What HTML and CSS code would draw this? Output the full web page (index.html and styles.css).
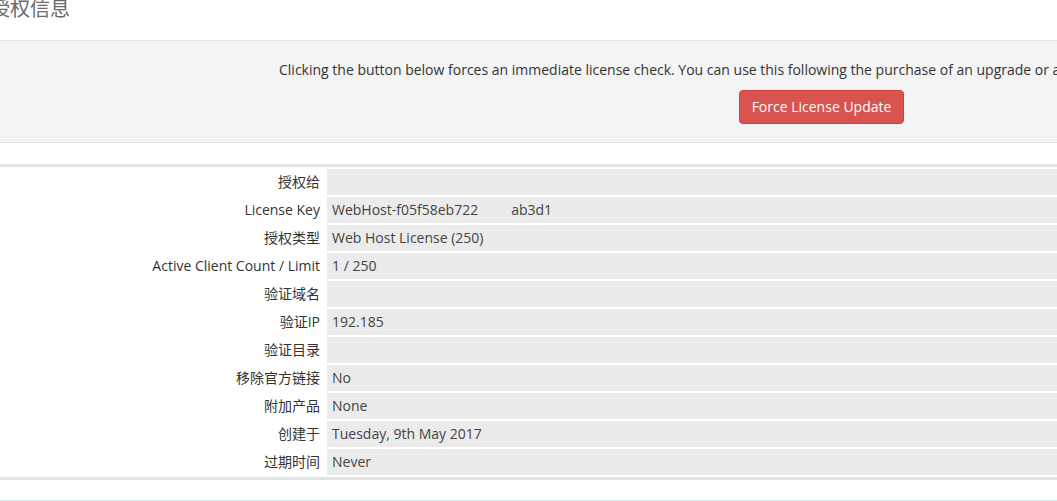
FILE: index.html
```html
<!DOCTYPE html>
<html lang="zh">
<head>
<meta charset="utf-8">
<title>授权信息</title>
<link rel="stylesheet" href="styles.css">
</head>
<body>
<div class="page">
  <h1 class="title">授权信息</h1>
  <div class="panel">
    <p class="panel-text">Clicking the button below forces an immediate license check. You can use this following the purchase of an upgrade or add-on to have the changes reflected immediately.</p>
    <div class="panel-actions">
      <button class="btn-danger" type="button">Force License Update</button>
    </div>
  </div>
  <table class="info">
    <tbody>
      <tr><td class="label">授权给</td><td class="value"></td></tr>
      <tr><td class="label">License Key</td><td class="value">WebHost-f05f58eb722<span class="blur-gap"></span>ab3d1</td></tr>
      <tr><td class="label">授权类型</td><td class="value">Web Host License (250)</td></tr>
      <tr><td class="label">Active Client Count / Limit</td><td class="value">1 / 250</td></tr>
      <tr><td class="label">验证域名</td><td class="value"></td></tr>
      <tr><td class="label">验证IP</td><td class="value">192.185</td></tr>
      <tr><td class="label">验证目录</td><td class="value"></td></tr>
      <tr><td class="label">移除官方链接</td><td class="value">No</td></tr>
      <tr><td class="label">附加产品</td><td class="value">None</td></tr>
      <tr><td class="label">创建于</td><td class="value">Tuesday, 9th May 2017</td></tr>
      <tr><td class="label">过期时间</td><td class="value">Never</td></tr>
    </tbody>
  </table>
  <div class="next-section"></div>
</div>
</body>
</html>
```
FILE: styles.css
```css
html, body {
  margin: 0;
  padding: 0;
  background: #ffffff;
  overflow: hidden;
}
body {
  font-family: "Open Sans", "Noto Sans CJK SC", sans-serif;
  font-size: 14px;
  color: #333333;
}
.page {
  width: 1660px;
  margin-left: -10px;
}
.title {
  margin: 0;
  height: 40px;
  font-family: "Noto Sans CJK SC", "Open Sans", sans-serif;
  font-weight: 400;
  font-size: 20px;
  line-height: 20px;
  color: #6a6a6a;
  margin-top: -2px;
  margin-bottom: 2px;
}
.panel {
  background: #f4f4f4;
  border-top: 1px solid #e3e3e3;
  border-bottom: 1px solid #e3e3e3;
  padding: 19px 0 18px;
  width: 1663px;
}
.panel-text {
  margin: 0 0 10px 289px;
  line-height: 20px;
  white-space: nowrap;
  color: #333333;
}
.panel-actions {
  text-align: center;
}
.btn-danger {
  font-family: "Open Sans", sans-serif;
  font-size: 14px;
  line-height: 20px;
  padding: 6px 12px;
  color: #ffffff;
  background: #d9534f;
  border: 1px solid #d43f3a;
  border-radius: 4px;
}
.info {
  margin-top: 21px;
  width: 100%;
  border-collapse: separate;
  border-spacing: 0 2px;
  border-top: 3px solid #e4e4e4;
  border-bottom: 3px solid #e1e4e4;
}
.info td {
  height: 26px;
  padding: 0;
  line-height: 20px;
  vertical-align: middle;
}
.label {
  width: 330px;
  text-align: right;
  padding-right: 7px !important;
  color: #333333;
  background: #ffffff;
}
.value {
  background: #ebebeb;
  padding-left: 5px !important;
  color: #444444;
}
.blur-gap {
  display: inline-block;
  width: 33px;
}
.next-section {
  margin-top: 20px;
  border-top: 1px solid #d2e8ee;
}
```
